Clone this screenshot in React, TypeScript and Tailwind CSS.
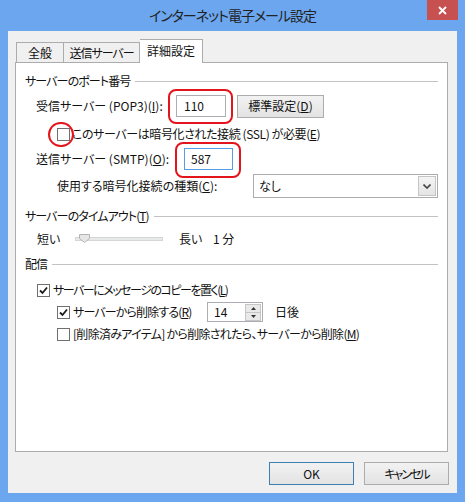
import React from "react";

const font = "font-['Noto_Sans_CJK_JP','Noto_Sans',sans-serif] [font-feature-settings:'palt']";

function Check({ checked }: { checked?: boolean }) {
    return (
        <span className="flex h-[13px] w-[13px] shrink-0 items-center justify-center border border-[#707070] bg-white">
            {checked && (
                <svg width="9" height="9" viewBox="0 0 9 9">
                    <path d="M1 4.5 L3.5 7 L8 1.5" fill="none" stroke="#1a1a1a" strokeWidth="1.8" />
                </svg>
            )}
        </span>
    );
}

function GroupHeader({ children }: { children: React.ReactNode }) {
    return (
        <div className="flex h-[20px] items-center gap-[5px] pl-[9px] pr-[9px]">
            <span className="whitespace-nowrap tracking-[-0.9px]">{children}</span>
            <div className="h-px flex-1 bg-[#c3c3c3]" />
        </div>
    );
}

function RedMark({ className }: { className: string }) {
    return <div className={`pointer-events-none absolute border-[2.5px] border-[#e3141c] ${className}`} />;
}

export default function App() {
    return (
        <div className={`${font} flex h-[502px] w-[465px] flex-col bg-[#6ba6ee] text-[12px] leading-none text-[#111]`}>
            {/* title bar */}
            <div className="grid h-[31px] grid-cols-[1fr_auto_1fr]">
                <div />
                <div className="flex items-center pb-[1px] text-[14px] tracking-[-1px] text-[#222]">インターネット電子メール設定</div>
                <div className="flex justify-end pr-[7px]">
                    <div className="flex h-[20px] w-[31px] items-center justify-center bg-[#c75050]">
                        <svg width="9" height="9" viewBox="0 0 9 9">
                            <path d="M1 1 L8 8 M8 1 L1 8" stroke="white" strokeWidth="1.8" />
                        </svg>
                    </div>
                </div>
            </div>

            {/* client area */}
            <div className="mx-[8px] flex h-[462px] flex-col bg-[#f0f0f0] pt-[7px]">
                {/* tabs */}
                <div className="flex h-[24px] items-end pl-[8px]">
                    <div className="flex h-[20px] w-[48px] items-center justify-center border border-b-0 border-[#acacac] bg-[#f0f0f0]">全般</div>
                    <div className="flex h-[20px] w-[76px] items-center justify-center border border-b-0 border-l-0 border-[#acacac] bg-[#f0f0f0] tracking-[-1px]">送信サーバー</div>
                    <div className="relative z-10 -mb-px flex h-[24px] w-[63px] items-center justify-center border border-b-0 border-l-0 border-[#acacac] bg-white pb-[2px]">詳細設定</div>
                </div>

                {/* tab panel */}
                <div className="ml-[7px] h-[390px] w-[433px] border border-[#acacac] bg-white">
                    <div className="mt-[8px]">
                        <GroupHeader>サーバーのポート番号</GroupHeader>
                    </div>

                    <div className="mt-[3px] flex h-[24px] items-center pl-[20px]">
                        <span className="w-[140px] whitespace-nowrap">受信サーバー (POP3)(<u>I</u>):</span>
                        <div className="relative">
                            <div className="flex h-[22px] w-[50px] items-center border border-[#abadb3] pl-[7px]">110</div>
                            <RedMark className="-top-[6px] -bottom-[7px] -left-[8px] -right-[7px] rounded-[8px]" />
                        </div>
                        <div className="ml-[11px] flex h-[23px] w-[87px] items-center justify-center border border-[#acacac] bg-gradient-to-b from-[#f2f2f2] to-[#e3e3e3]">
                            標準設定(<u>D</u>)
                        </div>
                    </div>

                    <div className="mt-[6px] flex h-[20px] items-center gap-[2px] pl-[41px]">
                        <div className="relative">
                            <Check />
                            <RedMark className="-top-[6px] -bottom-[6px] -left-[9px] -right-[4px] rounded-full" />
                        </div>
                        <span className="whitespace-nowrap tracking-[-0.4px]">このサーバーは暗号化された接続 (SSL) が必要(<u>E</u>)</span>
                    </div>

                    <div className="mt-[4px] flex h-[22px] items-center pl-[20px]">
                        <span className="w-[148px] whitespace-nowrap">送信サーバー (SMTP)(<u>O</u>):</span>
                        <div className="relative">
                            <div className="flex h-[22px] w-[49px] items-center border border-[#569de5] pl-[6px]">587</div>
                            <RedMark className="-top-[6px] -bottom-[8px] -left-[9px] -right-[8px] rounded-[8px]" />
                        </div>
                    </div>

                    <div className="mt-[4px] flex h-[24px] items-center pl-[41px]">
                        <span className="w-[196px] whitespace-nowrap">使用する暗号化接続の種類(<u>C</u>):</span>
                        <div className="flex h-[24px] w-[185px] items-center justify-between border border-[#acacac] bg-white pl-[5px] pr-[1px]">
                            <span>なし</span>
                            <div className="flex h-[20px] w-[18px] items-center justify-center border border-[#c5c5c5] bg-gradient-to-b from-[#f4f4f4] to-[#e4e4e4]">
                                <svg width="8" height="5" viewBox="0 0 8 5">
                                    <path d="M0.5 0.5 L4 4 L7.5 0.5" fill="none" stroke="#444" strokeWidth="1.6" />
                                </svg>
                            </div>
                        </div>
                    </div>

                    <div className="mt-[8px]">
                        <GroupHeader>サーバーのタイムアウト(<u>T</u>)</GroupHeader>
                    </div>

                    <div className="mt-[3px] flex h-[20px] items-center pl-[21px]">
                        <span className="w-[38px]">短い</span>
                        <div className="relative flex h-[10px] w-[88px] items-center">
                            <div className="h-[4px] w-full border border-[#d6d6d6] bg-[#e7eaea]" />
                            <svg className="absolute left-[4px] top-[0px]" width="11" height="9" viewBox="0 0 11 9">
                                <path d="M0.5 0.5 H10.5 V4.5 L5.5 8.5 L0.5 4.5 Z" fill="#e6e6e6" stroke="#b4b4b4" />
                            </svg>
                        </div>
                        <span className="ml-[16px] w-[34px]">長い</span>
                        <span>1 分</span>
                    </div>

                    <div className="mt-[5px]">
                        <GroupHeader>配信</GroupHeader>
                    </div>

                    <div className="mt-[6px] flex h-[20px] items-center gap-[3px] pl-[21px]">
                        <Check checked />
                        <span className="whitespace-nowrap tracking-[-1.5px]">サーバーにメッセージのコピーを置く(<u>L</u>)</span>
                    </div>

                    <div className="mt-[2px] flex h-[20px] items-center pl-[41px]">
                        <div className="flex w-[150px] items-center gap-[3px]">
                            <Check checked />
                            <span className="whitespace-nowrap tracking-[-0.85px]">サーバーから削除する(<u>R</u>)</span>
                        </div>
                        <div className="flex h-[20px] w-[56px] items-center justify-between border border-[#abadb3] pl-[6px] pr-[1px]">
                            <span>14</span>
                            <div className="flex h-[17px] w-[16px] flex-col border border-[#c5c5c5] bg-[#e9e9e9]">
                                <div className="flex flex-1 items-center justify-center border-b border-[#c5c5c5]">
                                    <svg width="5" height="3" viewBox="0 0 5 3"><path d="M0 3 L2.5 0 L5 3 Z" fill="#333" /></svg>
                                </div>
                                <div className="flex flex-1 items-center justify-center">
                                    <svg width="5" height="3" viewBox="0 0 5 3"><path d="M0 0 L2.5 3 L5 0 Z" fill="#333" /></svg>
                                </div>
                            </div>
                        </div>
                        <span className="ml-[12px]">日後</span>
                    </div>

                    <div className="mt-[2px] flex h-[20px] items-center gap-[3px] pl-[41px]">
                        <Check />
                        <span className="whitespace-nowrap tracking-[-0.7px]">[削除済みアイテム]&nbsp;から削除されたら、サーバーから削除(<u>M</u>)</span>
                    </div>
                </div>

                {/* buttons */}
                <div className="mt-[10px] flex justify-end gap-[10px] pr-[8px]">
                    <div className="flex h-[23px] w-[85px] items-center justify-center border border-[#3c7fb1] bg-gradient-to-b from-[#f2f2f2] to-[#e3e3e3]">OK</div>
                    <div className="flex h-[23px] w-[85px] items-center justify-center border border-[#acacac] bg-gradient-to-b from-[#f2f2f2] to-[#e3e3e3] tracking-[-2px]">キャンセル</div>
                </div>
            </div>
        </div>
    );
}
